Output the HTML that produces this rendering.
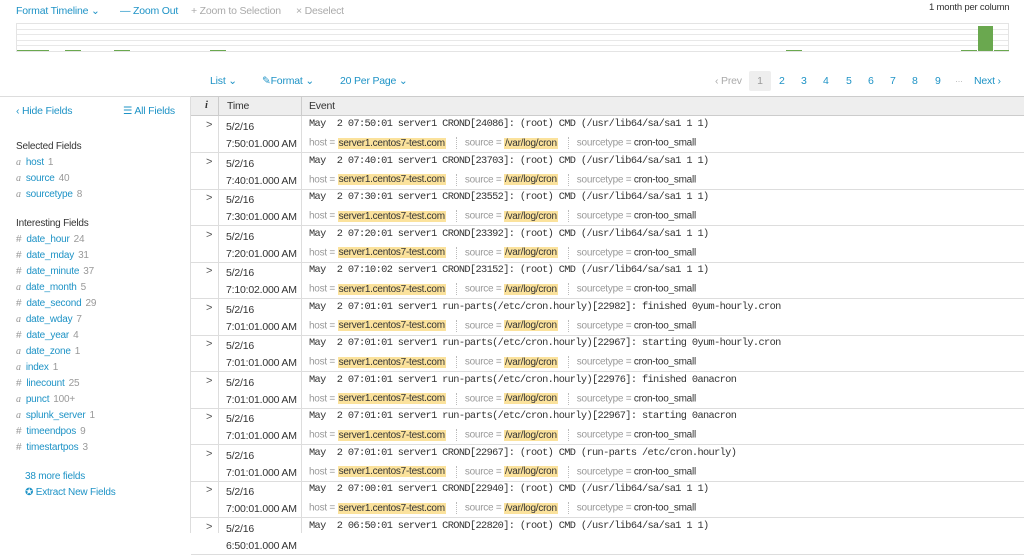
<!DOCTYPE html>
<html><head><meta charset="utf-8"><style>
*{margin:0;padding:0;box-sizing:border-box}
body{width:1024px;height:533px;overflow:hidden;background:#fff;font-family:"Liberation Sans",sans-serif;font-size:10.5px;letter-spacing:-0.2px;color:#333;position:relative}
.a{position:absolute;white-space:nowrap}
.blue{color:#1e93c6}
.gray{color:#aaa}
.tl{position:absolute;left:16px;top:23px;width:993px;height:29px;border:1px solid #e4e4e4}
.tl .g{position:absolute;left:0;right:0;height:1px;background:#e8e8e8}
.bar{position:absolute;background:#6aa84f;bottom:0}
.side{position:absolute;left:0;top:96px;width:191px;height:437px;border-right:1px solid #ddd;border-top:1px solid #ddd}
.hdr{position:absolute;left:191px;top:96px;width:833px;height:20px;background:#eee;border-top:1px solid #ccc;border-bottom:1px solid #ccc}
.row{position:absolute;left:191px;width:833px;height:37px;border-bottom:1px solid #ddd}
.row .c{position:absolute;left:15px;top:3px;font-size:11px;color:#555}
.row .t{position:absolute;left:35px;top:3px;line-height:17px;color:#333;font-size:10.5px}
.row .e{position:absolute;left:118px;top:2px;font-family:"Liberation Mono",monospace;font-size:10.3px;letter-spacing:-0.63px;color:#333;white-space:pre}
.row .f{position:absolute;left:118px;top:21px;font-size:10px;letter-spacing:-0.25px;color:#999;white-space:nowrap}
.hl{background:#fbe29c;color:#333;padding:0 1px}
.sep{display:inline-block;width:0;height:12px;border-left:1px dotted #bbb;margin:0 8px 0 10px;vertical-align:middle}
.fld{position:absolute;left:16px;font-size:10px}
.fld i{color:#999;font-style:italic;font-family:"Liberation Serif",serif;margin-right:5px}
.fld b{font-weight:normal;color:#999;margin-right:5px}
.fld .n{color:#999;margin-left:4px}
</style></head><body>
<div class="a blue" style="left:16px;top:5px">Format Timeline ⌄</div>
<div class="a blue" style="left:120px;top:5px">— Zoom Out</div>
<div class="a gray" style="left:191px;top:5px">+ Zoom to Selection</div>
<div class="a gray" style="left:296px;top:5px">× Deselect</div>
<div class="a" style="left:929px;top:2px;font-size:9.5px">1 month per column</div>
<div class="tl">
<div class="g" style="top:5px"></div><div class="g" style="top:10px"></div><div class="g" style="top:16px"></div><div class="g" style="top:21px"></div>
<div class="bar" style="left:0;width:32px;height:1px"></div>
<div class="bar" style="left:48px;width:16px;height:1px"></div>
<div class="bar" style="left:97px;width:16px;height:1px"></div>
<div class="bar" style="left:193px;width:16px;height:1px"></div>
<div class="bar" style="left:769px;width:16px;height:1px"></div>
<div class="bar" style="left:944px;width:16px;height:1px"></div>
<div class="bar" style="left:961px;width:15px;height:25px"></div>
<div class="bar" style="left:977px;width:15px;height:1px"></div>
</div>
<div class="a blue" style="left:210px;top:75px">List ⌄</div>
<div class="a blue" style="left:262px;top:75px">✎Format ⌄</div>
<div class="a blue" style="left:340px;top:75px">20 Per Page ⌄</div>
<div class="a gray" style="left:715px;top:75px">‹ Prev</div>
<div class="a" style="left:749px;top:71px;width:22px;height:20px;background:#eee;border-radius:2px;color:#999;text-align:center;line-height:20px">1</div>
<div class="a blue" style="left:779px;top:75px">2</div>
<div class="a blue" style="left:801px;top:75px">3</div>
<div class="a blue" style="left:823px;top:75px">4</div>
<div class="a blue" style="left:846px;top:75px">5</div>
<div class="a blue" style="left:868px;top:75px">6</div>
<div class="a blue" style="left:890px;top:75px">7</div>
<div class="a blue" style="left:912px;top:75px">8</div>
<div class="a blue" style="left:935px;top:75px">9</div>
<div class="a gray" style="left:955px;top:75px;font-size:8px">…</div>
<div class="a blue" style="left:974px;top:75px">Next ›</div>
<div class="side"></div>
<div class="a blue" style="left:16px;top:105px">‹ Hide Fields</div>
<div class="a blue" style="left:123px;top:105px">☰ All Fields</div>
<div class="a" style="left:16px;top:141px;font-size:10px">Selected Fields</div>
<div class="fld" style="top:157px"><i>a</i><span class="blue">host</span><span class="n">1</span></div>
<div class="fld" style="top:173px"><i>a</i><span class="blue">source</span><span class="n">40</span></div>
<div class="fld" style="top:189px"><i>a</i><span class="blue">sourcetype</span><span class="n">8</span></div>
<div class="a" style="left:16px;top:218px;font-size:10px">Interesting Fields</div>
<div class="fld" style="top:234px"><b>#</b><span class="blue">date_hour</span><span class="n">24</span></div>
<div class="fld" style="top:250px"><b>#</b><span class="blue">date_mday</span><span class="n">31</span></div>
<div class="fld" style="top:266px"><b>#</b><span class="blue">date_minute</span><span class="n">37</span></div>
<div class="fld" style="top:282px"><i>a</i><span class="blue">date_month</span><span class="n">5</span></div>
<div class="fld" style="top:298px"><b>#</b><span class="blue">date_second</span><span class="n">29</span></div>
<div class="fld" style="top:314px"><i>a</i><span class="blue">date_wday</span><span class="n">7</span></div>
<div class="fld" style="top:330px"><b>#</b><span class="blue">date_year</span><span class="n">4</span></div>
<div class="fld" style="top:346px"><i>a</i><span class="blue">date_zone</span><span class="n">1</span></div>
<div class="fld" style="top:362px"><i>a</i><span class="blue">index</span><span class="n">1</span></div>
<div class="fld" style="top:378px"><b>#</b><span class="blue">linecount</span><span class="n">25</span></div>
<div class="fld" style="top:394px"><i>a</i><span class="blue">punct</span><span class="n">100+</span></div>
<div class="fld" style="top:410px"><i>a</i><span class="blue">splunk_server</span><span class="n">1</span></div>
<div class="fld" style="top:426px"><b>#</b><span class="blue">timeendpos</span><span class="n">9</span></div>
<div class="fld" style="top:442px"><b>#</b><span class="blue">timestartpos</span><span class="n">3</span></div>
<div class="a blue" style="left:25px;top:471px;font-size:10px">38 more fields</div>
<div class="a blue" style="left:25px;top:487px;font-size:10px">✪ Extract New Fields</div>
<div class="hdr">
<div class="a" style="left:14px;top:3px;font-family:'Liberation Serif',serif;font-style:italic;font-weight:bold">i</div>
<div class="a" style="left:27px;top:0;width:1px;height:18px;background:#ccc"></div>
<div class="a" style="left:36px;top:3px">Time</div>
<div class="a" style="left:110px;top:0;width:1px;height:18px;background:#ccc"></div>
<div class="a" style="left:118px;top:3px">Event</div>
</div>
<div class="a" style="left:218px;top:116px;width:1px;height:417px;background:#ddd"></div>
<div class="a" style="left:301px;top:116px;width:1px;height:417px;background:#ddd"></div>
<div class="row" style="top:116px"><span class="c">&gt;</span><div class="t">5/2/16<br>7:50:01.000 AM</div><div class="e">May  2 07:50:01 server1 CROND[24086]: (root) CMD (/usr/lib64/sa/sa1 1 1)</div><div class="f">host = <span class="hl">server1.centos7-test.com</span><span class="sep"></span>source = <span class="hl">/var/log/cron</span><span class="sep"></span>sourcetype = <span style="color:#333">cron-too_small</span></div></div>
<div class="row" style="top:152.5px"><span class="c">&gt;</span><div class="t">5/2/16<br>7:40:01.000 AM</div><div class="e">May  2 07:40:01 server1 CROND[23703]: (root) CMD (/usr/lib64/sa/sa1 1 1)</div><div class="f">host = <span class="hl">server1.centos7-test.com</span><span class="sep"></span>source = <span class="hl">/var/log/cron</span><span class="sep"></span>sourcetype = <span style="color:#333">cron-too_small</span></div></div>
<div class="row" style="top:189px"><span class="c">&gt;</span><div class="t">5/2/16<br>7:30:01.000 AM</div><div class="e">May  2 07:30:01 server1 CROND[23552]: (root) CMD (/usr/lib64/sa/sa1 1 1)</div><div class="f">host = <span class="hl">server1.centos7-test.com</span><span class="sep"></span>source = <span class="hl">/var/log/cron</span><span class="sep"></span>sourcetype = <span style="color:#333">cron-too_small</span></div></div>
<div class="row" style="top:225.5px"><span class="c">&gt;</span><div class="t">5/2/16<br>7:20:01.000 AM</div><div class="e">May  2 07:20:01 server1 CROND[23392]: (root) CMD (/usr/lib64/sa/sa1 1 1)</div><div class="f">host = <span class="hl">server1.centos7-test.com</span><span class="sep"></span>source = <span class="hl">/var/log/cron</span><span class="sep"></span>sourcetype = <span style="color:#333">cron-too_small</span></div></div>
<div class="row" style="top:262px"><span class="c">&gt;</span><div class="t">5/2/16<br>7:10:02.000 AM</div><div class="e">May  2 07:10:02 server1 CROND[23152]: (root) CMD (/usr/lib64/sa/sa1 1 1)</div><div class="f">host = <span class="hl">server1.centos7-test.com</span><span class="sep"></span>source = <span class="hl">/var/log/cron</span><span class="sep"></span>sourcetype = <span style="color:#333">cron-too_small</span></div></div>
<div class="row" style="top:298.5px"><span class="c">&gt;</span><div class="t">5/2/16<br>7:01:01.000 AM</div><div class="e">May  2 07:01:01 server1 run-parts(/etc/cron.hourly)[22982]: finished 0yum-hourly.cron</div><div class="f">host = <span class="hl">server1.centos7-test.com</span><span class="sep"></span>source = <span class="hl">/var/log/cron</span><span class="sep"></span>sourcetype = <span style="color:#333">cron-too_small</span></div></div>
<div class="row" style="top:335px"><span class="c">&gt;</span><div class="t">5/2/16<br>7:01:01.000 AM</div><div class="e">May  2 07:01:01 server1 run-parts(/etc/cron.hourly)[22967]: starting 0yum-hourly.cron</div><div class="f">host = <span class="hl">server1.centos7-test.com</span><span class="sep"></span>source = <span class="hl">/var/log/cron</span><span class="sep"></span>sourcetype = <span style="color:#333">cron-too_small</span></div></div>
<div class="row" style="top:371.5px"><span class="c">&gt;</span><div class="t">5/2/16<br>7:01:01.000 AM</div><div class="e">May  2 07:01:01 server1 run-parts(/etc/cron.hourly)[22976]: finished 0anacron</div><div class="f">host = <span class="hl">server1.centos7-test.com</span><span class="sep"></span>source = <span class="hl">/var/log/cron</span><span class="sep"></span>sourcetype = <span style="color:#333">cron-too_small</span></div></div>
<div class="row" style="top:408px"><span class="c">&gt;</span><div class="t">5/2/16<br>7:01:01.000 AM</div><div class="e">May  2 07:01:01 server1 run-parts(/etc/cron.hourly)[22967]: starting 0anacron</div><div class="f">host = <span class="hl">server1.centos7-test.com</span><span class="sep"></span>source = <span class="hl">/var/log/cron</span><span class="sep"></span>sourcetype = <span style="color:#333">cron-too_small</span></div></div>
<div class="row" style="top:444.5px"><span class="c">&gt;</span><div class="t">5/2/16<br>7:01:01.000 AM</div><div class="e">May  2 07:01:01 server1 CROND[22967]: (root) CMD (run-parts /etc/cron.hourly)</div><div class="f">host = <span class="hl">server1.centos7-test.com</span><span class="sep"></span>source = <span class="hl">/var/log/cron</span><span class="sep"></span>sourcetype = <span style="color:#333">cron-too_small</span></div></div>
<div class="row" style="top:481px"><span class="c">&gt;</span><div class="t">5/2/16<br>7:00:01.000 AM</div><div class="e">May  2 07:00:01 server1 CROND[22940]: (root) CMD (/usr/lib64/sa/sa1 1 1)</div><div class="f">host = <span class="hl">server1.centos7-test.com</span><span class="sep"></span>source = <span class="hl">/var/log/cron</span><span class="sep"></span>sourcetype = <span style="color:#333">cron-too_small</span></div></div>
<div class="row" style="top:517.5px"><span class="c">&gt;</span><div class="t">5/2/16<br>6:50:01.000 AM</div><div class="e">May  2 06:50:01 server1 CROND[22820]: (root) CMD (/usr/lib64/sa/sa1 1 1)</div></div>
</body></html>
